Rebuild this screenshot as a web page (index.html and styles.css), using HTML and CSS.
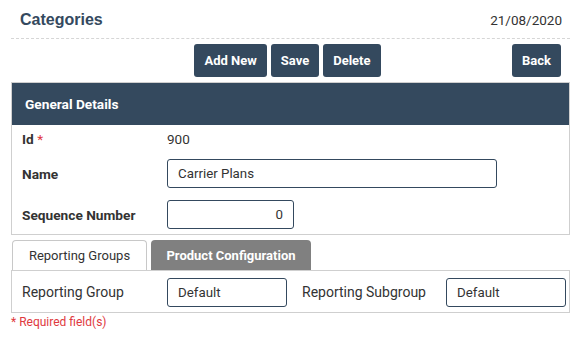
FILE: index.html
```html
<!DOCTYPE html>
<html>
<head>
<meta charset="utf-8">
<link rel="stylesheet" href="styles.css">
</head>
<body>
<div class="page">
  <div class="topbar">
    <h1 class="title">Categories</h1>
    <span class="date">21/08/2020</span>
  </div>
  <div class="actions">
    <div class="group">
      <button class="btn">Add New</button>
      <button class="btn">Save</button>
      <button class="btn">Delete</button>
    </div>
    <div class="back-wrap"><button class="btn">Back</button></div>
  </div>
  <div class="panel">
    <div class="panel-head">General Details</div>
    <div class="panel-body">
      <div class="row row-id">
        <span class="label">Id <span class="req">*</span></span>
        <span class="value">900</span>
      </div>
      <div class="row row-name">
        <span class="label">Name</span>
        <div class="input input-name">Carrier Plans</div>
      </div>
      <div class="row row-seq">
        <span class="label">Sequence Number</span>
        <div class="input input-seq">0</div>
      </div>
    </div>
  </div>
  <div class="tabs">
    <div class="tab tab-active">Reporting Groups</div>
    <div class="tab tab-inactive">Product Configuration</div>
  </div>
  <div class="tab-panel">
    <span class="label2">Reporting Group</span>
    <div class="input input-small">Default</div>
    <span class="label2 label-sub">Reporting Subgroup</span>
    <div class="input input-small">Default</div>
  </div>
  <div class="required">* Required field(s)</div>
</div>
</body>
</html>
```
FILE: styles.css
```css
* { box-sizing: border-box; }
html, body { margin: 0; padding: 0; background: #fff; }
body { font-family: Roboto, "Liberation Sans", Arial, sans-serif; color: #333; }
.page { width: 559px; margin-left: 11px; }
.topbar {
  height: 39px;
  display: flex;
  align-items: center;
  justify-content: space-between;
  padding: 2px 8px 0 9px;
  border-bottom: 1px dashed #d6d6d6;
}
.title { margin: 0; font-size: 16px; font-weight: bold; color: #34495e; font-family: "Liberation Sans", Arial, sans-serif; }
.date { font-size: 13.5px; color: #333; }
.actions {
  display: grid;
  grid-template-columns: 1fr auto 1fr;
  margin-top: 5px;
  height: 33px;
}
.group { grid-column: 2; display: flex; gap: 4px; margin-right: 6px; }
.back-wrap { grid-column: 3; display: flex; justify-content: flex-end; padding-right: 9px; }
.btn {
  height: 33px;
  border: none;
  border-radius: 3px;
  background: #34495e;
  color: #fff;
  font-family: Roboto, "Liberation Sans", Arial, sans-serif;
  font-weight: bold;
  font-size: 13px;
  padding: 0 10px;
  margin: 0;
}
.panel { margin-top: 5px; border: 1px solid #cfcfcf; }
.panel-head {
  height: 42px;
  background: #34495e;
  color: #fff;
  font-weight: bold;
  font-size: 13.7px;
  display: flex;
  align-items: center;
  padding-left: 13px;
}
.panel-body { padding: 3px 0 5px 0; }
.row { display: flex; align-items: center; }
.label { width: 155px; padding-left: 10px; font-weight: bold; font-size: 13.7px; color: #333; }
.req { color: #e0393e; font-weight: normal; }
.row-id { height: 22px; }
.value { font-size: 13.5px; }
.row-name { margin-top: 9px; }
.row-seq { margin-top: 12px; }
.input {
  height: 29px;
  border: 1px solid #34495e;
  border-radius: 3px;
  font-size: 13.3px;
  color: #333;
  display: flex;
  align-items: center;
  padding: 0 10px;
}
.input-name { width: 330px; }
.input-seq { width: 127px; justify-content: flex-end; }
.tabs { display: flex; gap: 4px; margin-top: 5px; padding-left: 1px; height: 30px; }
.tab {
  height: 30px;
  display: flex;
  align-items: center;
  justify-content: center;
  font-size: 13px;
  border-radius: 4px 4px 0 0;
}
.tab-active { width: 135px; border: 1px solid #c8c8c8; border-bottom: none; background: #fff; color: #333; }
.tab-inactive { width: 160px; background: #808080; color: #fff; font-weight: bold; }
.tab-panel {
  border: 1px solid #cfcfcf;
  height: 43px;
  display: flex;
  align-items: center;
  padding-top: 1px;
}
.label2 { width: 155px; padding-left: 10px; font-size: 14px; color: #333; }
.label-sub { width: 159px; padding-left: 15px; }
.input-small { width: 120px; }
.required { color: #e0393e; font-size: 12px; margin-top: 2px; }
```
